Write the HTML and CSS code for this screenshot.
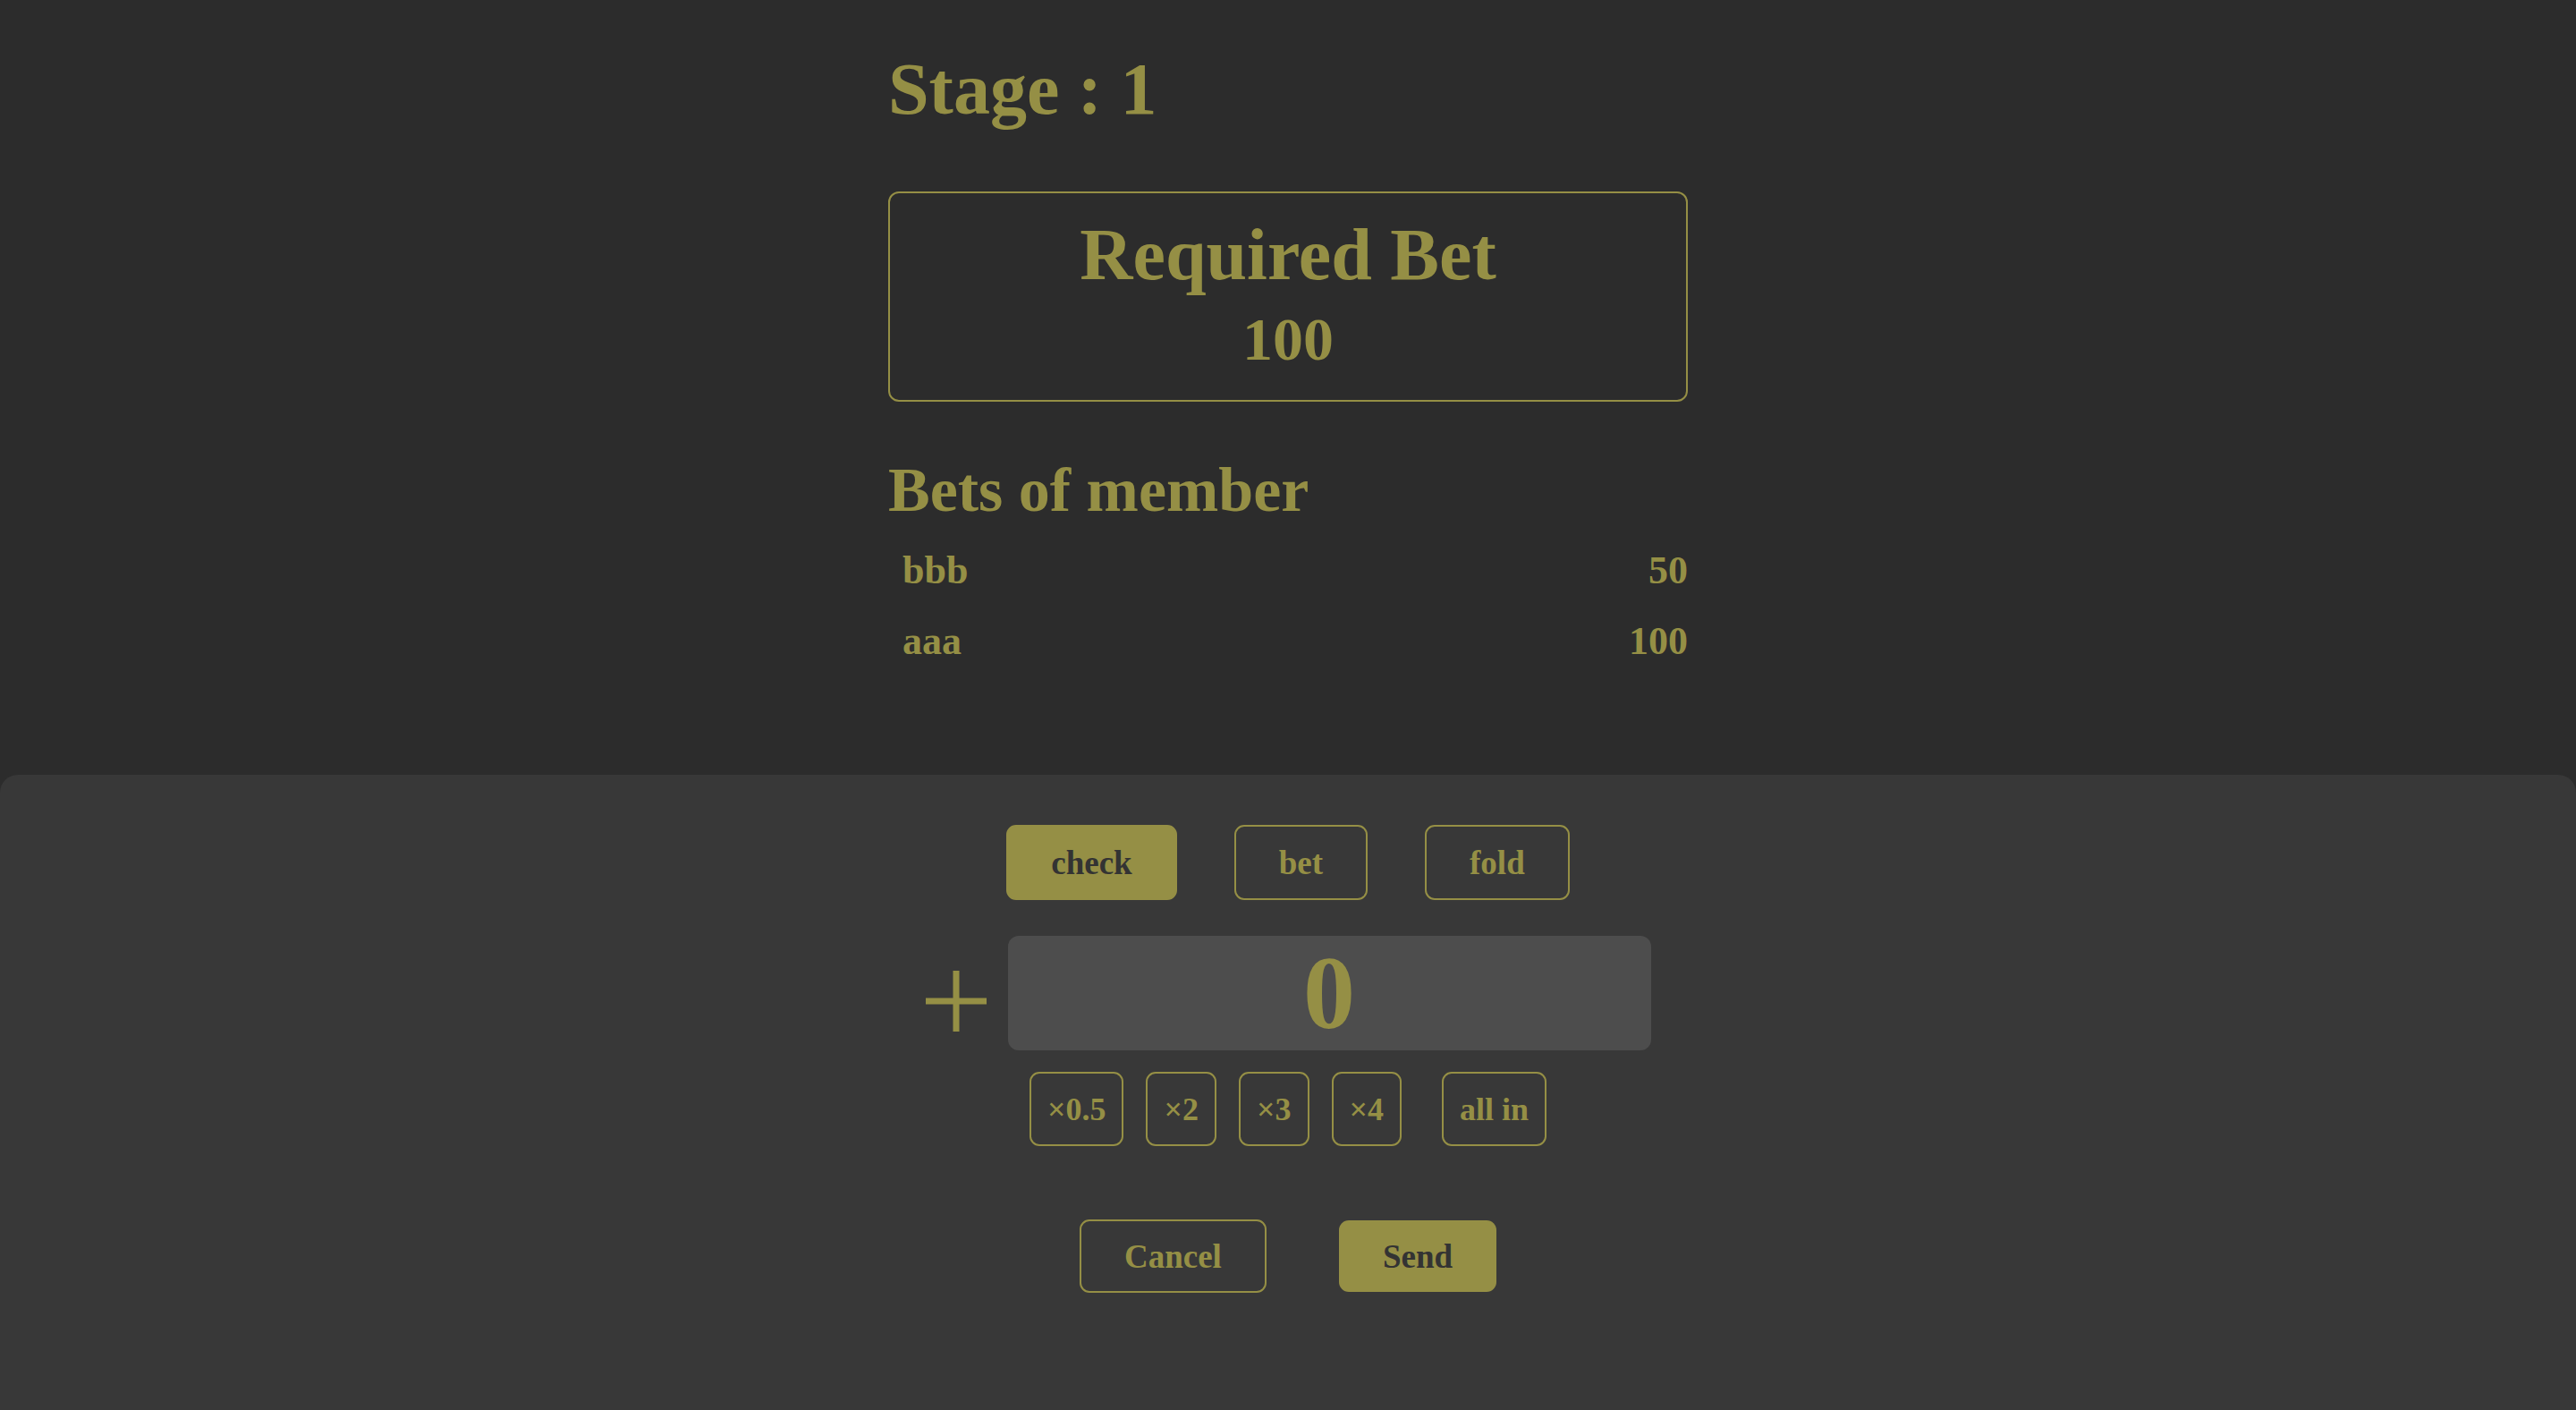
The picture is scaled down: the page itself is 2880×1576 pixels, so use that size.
FILE: index.html
```html
<!DOCTYPE html>
<html lang="en">
<head>
<meta charset="utf-8">
<title>Stage</title>
<link rel="stylesheet" href="styles.css">
</head>
<body>
  <main class="main">
    <h1 class="stage">Stage : 1</h1>
    <section class="required">
      <h2 class="required-title">Required Bet</h2>
      <div class="required-value">100</div>
    </section>
    <h2 class="members-title">Bets of member</h2>
    <ul class="members">
      <li class="member"><span class="member-name">bbb</span><span class="member-bet">50</span></li>
      <li class="member"><span class="member-name">aaa</span><span class="member-bet">100</span></li>
    </ul>
  </main>
  <section class="panel">
    <div class="actions">
      <button class="btn btn-filled">check</button>
      <button class="btn">bet</button>
      <button class="btn">fold</button>
    </div>
    <div class="amount-row">
      <svg class="plus" width="68" height="68" viewBox="0 0 68 68" aria-hidden="true">
        <rect x="30.5" y="0" width="7" height="68" fill="#958f45"/>
        <rect x="0" y="30.5" width="68" height="7" fill="#958f45"/>
      </svg>
      <div class="amount">0</div>
    </div>
    <div class="multipliers">
      <button class="btn btn-small">×0.5</button>
      <button class="btn btn-small">×2</button>
      <button class="btn btn-small">×3</button>
      <button class="btn btn-small">×4</button>
      <button class="btn btn-small btn-allin">all in</button>
    </div>
    <div class="confirm">
      <button class="btn btn-cancel">Cancel</button>
      <button class="btn btn-filled btn-send">Send</button>
    </div>
  </section>
</body>
</html>
```

FILE: styles.css
```css
html, body {
  margin: 0;
  padding: 0;
}

body {
  min-height: 100vh;
  display: flex;
  flex-direction: column;
  background: #2c2c2c;
  color: #958f45;
  font-family: "Liberation Serif", "Times New Roman", serif;
  font-weight: 700;
}

.main {
  width: 894px;
  margin: 0 auto;
}

.stage {
  margin: 59px 0 0;
  font-size: 82px;
  line-height: 1;
  font-weight: 700;
}

.required {
  margin-top: 73px;
  border: 2px solid #958f45;
  border-radius: 12px;
  padding: 28px 0 34px;
  text-align: center;
}

.required-title {
  margin: 0;
  font-size: 82px;
  line-height: 1;
  font-weight: 700;
}

.required-value {
  margin-top: 19px;
  font-size: 68px;
  line-height: 1;
}

.members-title {
  margin: 64px 0 0;
  font-size: 70px;
  line-height: 1;
  font-weight: 700;
}

.members {
  list-style: none;
  margin: 15px 0 0;
  padding: 0;
}

.member {
  display: flex;
  justify-content: space-between;
  font-size: 44px;
  line-height: 79px;
  padding-left: 16px;
}

.panel {
  flex: 1;
  margin-top: 110px;
  background: #383838;
  border-radius: 20px 20px 0 0;
  padding-top: 56px;
  display: flex;
  flex-direction: column;
  align-items: center;
}

.btn {
  box-sizing: border-box;
  height: 84px;
  padding: 0 48px;
  border: 2px solid #958f45;
  border-radius: 11px;
  background: transparent;
  color: #958f45;
  font-family: inherit;
  font-weight: 700;
  font-size: 37px;
  line-height: 1;
  display: inline-flex;
  align-items: center;
  justify-content: center;
}

.btn-filled {
  background: #958f45;
  color: #333333;
}

.actions {
  display: flex;
  gap: 64px;
}

.amount-row {
  margin-top: 40px;
  display: flex;
  align-items: center;
  gap: 24px;
}

.plus {
  display: block;
  margin-top: 18px;
}

.amount {
  width: 719px;
  height: 128px;
  border-radius: 12px;
  background: #4d4d4d;
  display: flex;
  align-items: center;
  justify-content: center;
  font-size: 116px;
  line-height: 1;
}

.multipliers {
  margin-top: 24px;
  display: flex;
  gap: 25px;
}

.btn-small {
  height: 83px;
  padding: 0 18px;
  font-size: 36px;
}

.btn-allin {
  margin-left: 20px;
}

.confirm {
  margin-top: 82px;
  display: flex;
  align-items: center;
  gap: 81px;
}

.btn-cancel {
  height: 82px;
  padding: 0 48px;
}

.btn-send {
  height: 80px;
  padding: 0 49px;
  border: 0;
}
```
